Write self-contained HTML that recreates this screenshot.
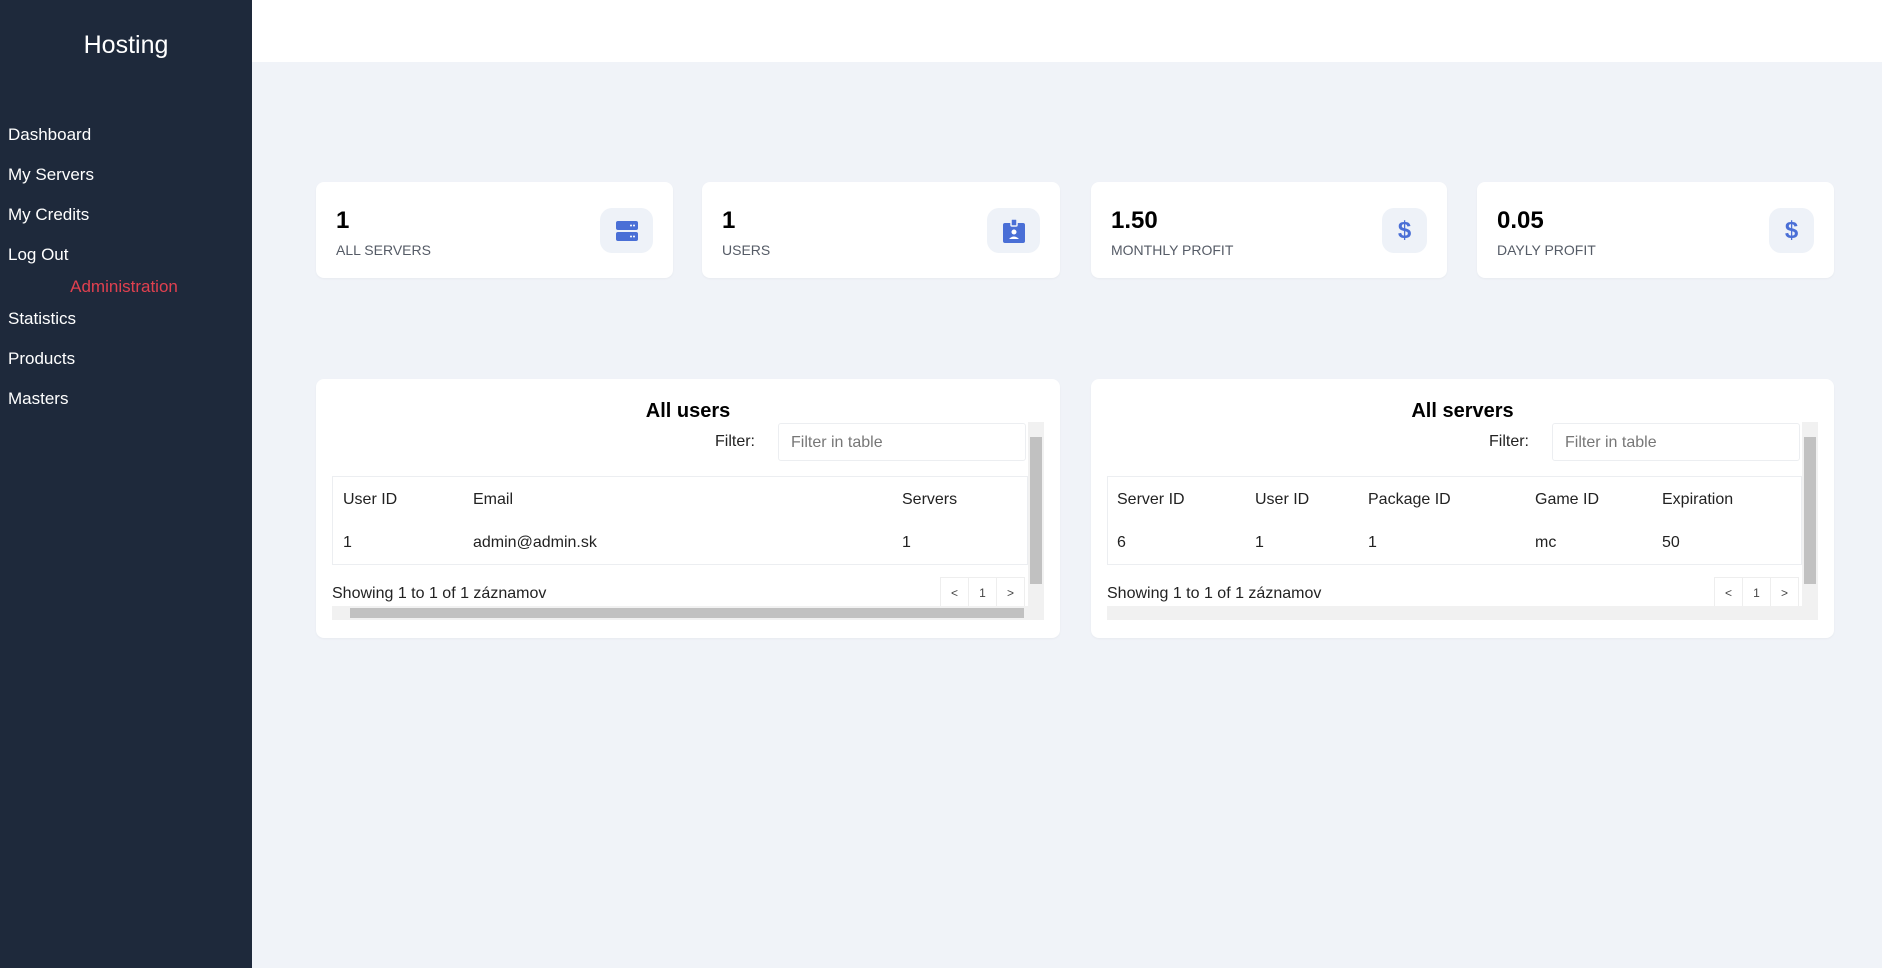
<!DOCTYPE html>
<html><head><meta charset="utf-8"><style>
*{box-sizing:border-box;margin:0;padding:0}
body{width:1882px;height:968px;background:#f0f3f8;font-family:"Liberation Sans",sans-serif;position:relative;overflow:hidden;color:#111}
.abs{position:absolute}
#side{left:0;top:0;width:252px;height:968px;background:#1e293b}
#side .t{position:absolute;left:0;width:252px;text-align:center;top:31px;color:#fff;font-size:25px}
#side .n{position:absolute;left:8px;color:#fff;font-size:17px}
#hdr{left:252px;top:0;width:1630px;height:62px;background:#fff}
.card{position:absolute;background:#fff;border-radius:8px;box-shadow:0 1px 2px rgba(0,0,0,.04)}
.num{position:absolute;left:20px;top:25px;font-size:24px;font-weight:bold;color:#000}
.lbl{position:absolute;left:20px;top:60px;font-size:14px;color:#555b66}
.ic{position:absolute;right:20px;top:26px;width:53px;height:45px;border-radius:12px;background:#eef2f8;display:flex;align-items:center;justify-content:center}
.tt{position:absolute;width:100%;text-align:center;top:21px;font-size:20px;font-weight:bold;color:#000}
.fl{position:absolute;font-size:16px;color:#222}
.inp{position:absolute;height:38px;border:1px solid #eceef1;border-radius:3px;font-size:16px;color:#777;padding:10px 12px;background:#fff}
.tb{position:absolute;border:1px solid #eceef1;height:89px}
.c{position:absolute;font-size:16px;color:#222}
.vs{position:absolute;width:16px;background:#f1f1f1}
.vs i{position:absolute;left:2px;right:2px;top:15px;bottom:15px;background:#c1c1c1}
.hs{position:absolute;height:14px;background:#f1f1f1}
.pg{position:absolute;height:30px;display:flex}
.pg span{width:29px;border:1px solid #eee;text-align:center;font-size:12px;color:#444;line-height:30px;margin-left:-1px}
.dl{color:#4a6fd6;font-size:24px;font-weight:bold}
</style></head><body>
<div id="side" class="abs">
<div class="t">Hosting</div>
<div class="n" style="top:125px">Dashboard</div>
<div class="n" style="top:165px">My Servers</div>
<div class="n" style="top:205px">My Credits</div>
<div class="n" style="top:245px">Log Out</div>
<div class="n" style="top:277px;left:0;width:248px;text-align:center;color:#e0404f">Administration</div>
<div class="n" style="top:309px">Statistics</div>
<div class="n" style="top:349px">Products</div>
<div class="n" style="top:389px">Masters</div>
</div>
<div id="hdr" class="abs"></div>

<div class="card" style="left:316px;top:182px;width:357px;height:96px"><div class="num">1</div><div class="lbl">ALL SERVERS</div><div class="ic"><svg width="24" height="24" viewBox="0 0 24 24"><rect x="1" y="2" width="22" height="9" rx="2" fill="#4a6fd6"/><rect x="1" y="13" width="22" height="9" rx="2" fill="#4a6fd6"/><circle cx="16" cy="6.5" r="1" fill="#fff"/><circle cx="19" cy="6.5" r="1" fill="#fff"/><circle cx="16" cy="17.5" r="1" fill="#fff"/><circle cx="19" cy="17.5" r="1" fill="#fff"/></svg></div></div>
<div class="card" style="left:702px;top:182px;width:358px;height:96px"><div class="num">1</div><div class="lbl">USERS</div><div class="ic" style="right:20px"><svg width="26" height="26" viewBox="0 0 26 26"><rect x="2" y="5" width="22" height="20" rx="2" fill="#4a6fd6"/><rect x="10" y="1" width="6" height="7" rx="1" fill="#4a6fd6" stroke="#eef2f8" stroke-width="1.5"/><circle cx="13" cy="14" r="2.5" fill="#fff"/><path d="M8 21q5-5 10 0z" fill="#fff"/></svg></div></div>
<div class="card" style="left:1091px;top:182px;width:356px;height:96px"><div class="num">1.50</div><div class="lbl">MONTHLY PROFIT</div><div class="ic" style="width:45px"><span class="dl">$</span></div></div>
<div class="card" style="left:1477px;top:182px;width:357px;height:96px"><div class="num">0.05</div><div class="lbl">DAYLY PROFIT</div><div class="ic" style="width:45px"><span class="dl">$</span></div></div>

<div class="card" style="left:316px;top:379px;width:744px;height:259px">
<div class="tt">All users</div>
<div class="fl" style="left:399px;top:54px">Filter:</div>
<div class="inp" style="left:462px;top:44px;width:248px">Filter in table</div>
<div class="tb" style="left:16px;top:97px;width:696px"></div>
<div class="c" style="left:27px;top:112px">User ID</div><div class="c" style="left:157px;top:112px">Email</div><div class="c" style="left:586px;top:112px">Servers</div>
<div class="c" style="left:27px;top:155px">1</div><div class="c" style="left:157px;top:155px">admin@admin.sk</div><div class="c" style="left:586px;top:155px">1</div>
<div class="c" style="left:16px;top:206px">Showing 1 to 1 of 1 záznamov</div>
<div class="pg" style="left:625px;top:198px"><span>&lt;</span><span>1</span><span>&gt;</span></div>
<div class="vs" style="left:712px;top:43px;height:184px"><i style="bottom:22px"></i></div>
<div class="hs" style="left:16px;top:227px;width:712px"><div style="position:absolute;left:18px;right:20px;top:2px;bottom:2px;background:#c1c1c1"></div></div>
</div>

<div class="card" style="left:1091px;top:379px;width:743px;height:259px">
<div class="tt">All servers</div>
<div class="fl" style="left:398px;top:54px">Filter:</div>
<div class="inp" style="left:461px;top:44px;width:248px">Filter in table</div>
<div class="tb" style="left:16px;top:97px;width:695px"></div>
<div class="c" style="left:26px;top:112px">Server ID</div><div class="c" style="left:164px;top:112px">User ID</div><div class="c" style="left:277px;top:112px">Package ID</div><div class="c" style="left:444px;top:112px">Game ID</div><div class="c" style="left:571px;top:112px">Expiration</div>
<div class="c" style="left:26px;top:155px">6</div><div class="c" style="left:164px;top:155px">1</div><div class="c" style="left:277px;top:155px">1</div><div class="c" style="left:444px;top:155px">mc</div><div class="c" style="left:571px;top:155px">50</div>
<div class="c" style="left:16px;top:206px">Showing 1 to 1 of 1 záznamov</div>
<div class="pg" style="left:624px;top:198px"><span>&lt;</span><span>1</span><span>&gt;</span></div>
<div class="vs" style="left:711px;top:43px;height:184px"><i style="bottom:22px"></i></div>
<div class="hs" style="left:16px;top:227px;width:711px"></div>
</div>
</body></html>
